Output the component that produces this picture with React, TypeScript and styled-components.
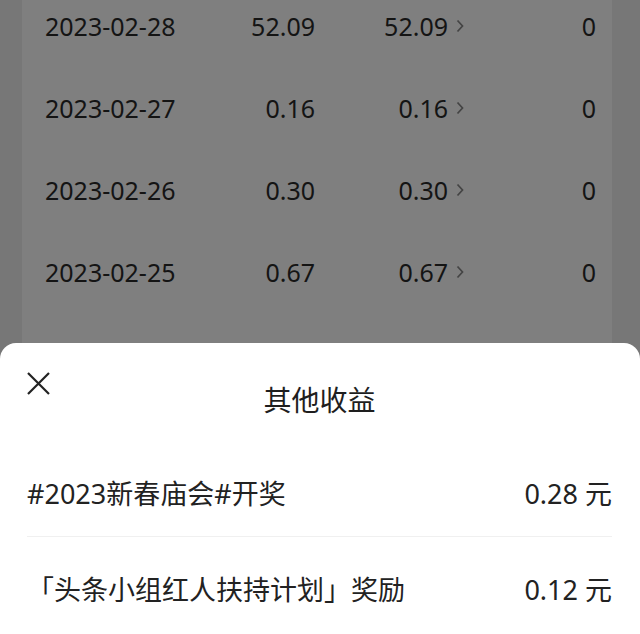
import styled, { createGlobalStyle } from "styled-components";

const Global = createGlobalStyle`
  html, body {
    margin: 0;
    padding: 0;
    width: 640px;
    height: 634px;
    overflow: hidden;
    background: #777777;
    font-family: "Noto Sans", "Noto Sans CJK SC", sans-serif;
  }
`

const Page = styled.div`
  position: relative;
  width: 640px;
  height: 634px;
  background: #777777;
  overflow: hidden;
`

const Card = styled.div`
  margin: 0 28px 0 22px;
  height: 634px;
  background: #7f7f7f;
  padding-top: 0;
`

const Row = styled.div`
  display: grid;
  grid-template-columns: 150px 120px 133px 1fr;
  align-items: center;
  height: 82px;
  margin-top: -15px;
  margin-bottom: 15px;
  padding: 0 16px 0 23px;
  font-size: 25px;
  color: #141414;
`

const Cell = styled.div<{ $right?: boolean }>`
  display: flex;
  align-items: center;
  justify-content: ${p => (p.$right ? "flex-end" : "flex-start")};
  white-space: nowrap;
`

const Arrow = styled.svg`
  width: 8px;
  height: 14px;
  margin-left: 8px;
  margin-right: -16px;
  flex-shrink: 0;
`

const Sheet = styled.div`
  position: absolute;
  left: 0;
  right: 0;
  top: 343px;
  bottom: 0;
  background: #fff;
  border-radius: 16px 16px 0 0;
  padding: 0 28px 0 27px;
`

const Header = styled.div`
  position: relative;
  height: 106px;
  display: flex;
  justify-content: center;
  padding-top: 36px;
  box-sizing: border-box;
`

const Close = styled.button`
  position: absolute;
  left: 0;
  top: 29px;
  width: 23px;
  height: 23px;
  border: 0;
  background: none;
  padding: 0;
  display: flex;
`

const Title = styled.div`
  font-family: "Noto Sans CJK SC", sans-serif;
  font-size: 28px;
  font-weight: 400;
  color: #1e1e1e;
  line-height: 40px;
`

const Item = styled.div<{ $h: number; $line?: boolean }>`
  display: flex;
  justify-content: space-between;
  align-items: center;
  height: ${p => p.$h}px;
  box-sizing: border-box;
  border-bottom: ${p => (p.$line ? "1px solid #f0f0f0" : "none")};
  font-family: "Noto Sans", "Noto Sans CJK SC", sans-serif;
  font-size: 27px;
  color: #222;
`

const Label = styled.span``

const Amount = styled.span``

const rows = [
  ["2023-02-28", "52.09", "52.09", "0"],
  ["2023-02-27", "0.16", "0.16", "0"],
  ["2023-02-26", "0.30", "0.30", "0"],
  ["2023-02-25", "0.67", "0.67", "0"],
]

export default function App() {
  return (
    <Page>
      <Global />
      <Card>
        {rows.map(r => (
          <Row key={r[0]}>
            <Cell>{r[0]}</Cell>
            <Cell $right>{r[1]}</Cell>
            <Cell $right>
              {r[2]}
              <Arrow viewBox="0 0 8 14">
                <path d="M1.5 1.5 L6.5 7 L1.5 12.5" stroke="#444" strokeWidth="1.7" fill="none" />
              </Arrow>
            </Cell>
            <Cell $right>{r[3]}</Cell>
          </Row>
        ))}
      </Card>
      <Sheet>
        <Header>
          <Close>
            <svg width="23" height="23" viewBox="0 0 23 23">
              <path d="M1 1 L22 22 M22 1 L1 22" stroke="#222" strokeWidth="2.2" fill="none" />
            </svg>
          </Close>
          <Title>其他收益</Title>
        </Header>
        <Item $h={88} $line>
          <Label>#2023新春庙会#开奖</Label>
          <Amount>0.28 元</Amount>
        </Item>
        <Item $h={102}>
          <Label>「头条小组红人扶持计划」奖励</Label>
          <Amount>0.12 元</Amount>
        </Item>
      </Sheet>
    </Page>
  )
}
